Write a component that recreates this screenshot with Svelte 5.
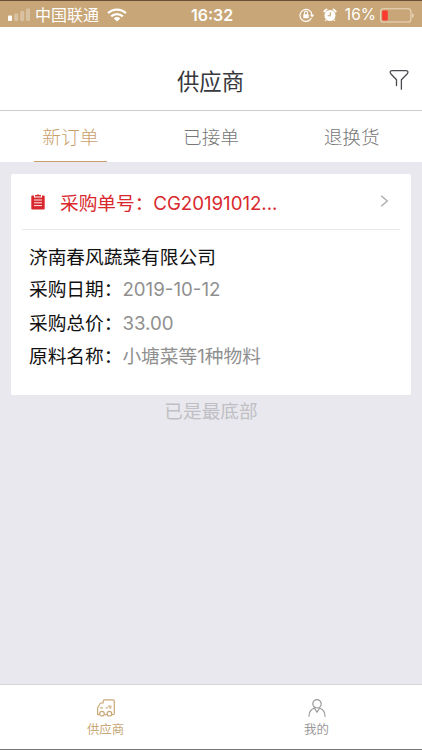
<script>
const tabs = ['新订单', '已接单', '退换货'];
let selected = $state(tabs[0]);

const order = {
    code: 'CG20191012...',
    company: '济南春风蔬菜有限公司',
    rows: [
        { label: '采购日期：', value: '2019-10-12' },
        { label: '采购总价：', value: '33.00' },
        { label: '原料名称：', value: '小塘菜等1种物料' },
    ],
};
</script>

<div class="screen">
  <div class="status">
    <div class="side">
      <svg class="signal" width="24" height="14" viewBox="0 0 24 14" fill="#fff">
        <rect x="0" y="7.6" width="4" height="5.4" rx="1" />
        <rect x="6.2" y="5.4" width="4" height="7.6" rx="1" opacity=".3" />
        <rect x="12.2" y="3" width="4" height="10" rx="1" opacity=".3" />
        <rect x="18" y="0.5" width="4" height="12.5" rx="1" opacity=".3" />
      </svg>
      <span class="carrier">中国联通</span>
      <svg class="wifi" width="20" height="14" viewBox="0 0 20 14" fill="none" stroke="#fff" stroke-width="2.3">
        <path d="M1.1 5.2a12.8 12.8 0 0 1 17.8 0" />
        <path d="M4.2 8.4a8.4 8.4 0 0 1 11.6 0" />
        <path d="M10 13.6 6.7 10.4a4.7 4.7 0 0 1 6.6 0z" fill="#fff" stroke="none" />
      </svg>
    </div>
    <span class="time">16:32</span>
    <div class="side right">
      <svg class="lock" width="16" height="14" viewBox="0 0 16 14" fill="none" stroke="#fff" stroke-width="1.2">
        <path d="M12.4 10.1A6 6 0 1 1 13 7" />
        <path d="M10.9 6.8h4.4L13.1 9.6z" fill="#fff" stroke="none" />
        <rect x="4.3" y="6.2" width="5.4" height="4" rx=".5" fill="#fff" stroke="none" />
        <path d="M5.4 6.4V5a1.6 1.6 0 0 1 3.2 0v1.4" stroke-width="1.1" />
      </svg>
      <svg class="alarm" width="14" height="14" viewBox="0 0 14 14" fill="none">
        <circle cx="7" cy="7.5" r="5.5" fill="#fff" />
        <path d="M1.2 3.5 3.5 1.4M12.8 3.5 10.5 1.4" stroke="#fff" stroke-width="1.8" stroke-linecap="round" />
        <path d="M3 11.8 2.2 13M11 11.8l.8 1.2" stroke="#fff" stroke-width="1.3" />
        <path d="M7.3 4.3v3.5H4.6" stroke="#c8a677" stroke-width="1.1" />
      </svg>
      <span class="percent">16%</span>
      <svg class="battery" width="35" height="15" viewBox="0 0 35 15">
        <rect x=".6" y=".8" width="30.3" height="13.2" rx="2.8" fill="none" stroke="#ead9bf" stroke-width="1.1" />
        <rect x="2.2" y="2.4" width="5.6" height="10" rx="1" fill="#fb3b30" />
        <path d="M32.2 5.2c2 .6 2 4 0 4.6z" fill="#ead9bf" />
      </svg>
    </div>
  </div>

  <header>
    <h1>供应商</h1>
    <svg class="filter" width="20" height="22" viewBox="0 0 20 22" fill="none" stroke="#4a4a4f" stroke-width="1.3" stroke-linejoin="round" stroke-linecap="round">
      <path d="M7.5 16.5v-5.8L2 5C.6 3.4 1 1.7 2.9 1.7h14.3c1.9 0 2.3 1.7.9 3.3l-5.7 5.7v9.5" />
    </svg>
  </header>

  <nav class="tabs">
    {#each tabs as item}
      <button class="tab" class:active={selected === item} onclick={() => (selected = item)}>
        <span>{item}</span>
      </button>
    {/each}
  </nav>

  <main>
    <section class="card">
      <div class="head">
        <svg width="14" height="16" viewBox="0 0 14 16">
          <path d="M1.2 1.4H3v2h8v-2h1.8q.9 0 .9.9v12.2q0 1-.9 1H1.2q-.9 0-.9-1V2.3q0-.9.9-.9z" fill="#d9282d" />
          <path d="M4 1h1.8Q7-.6 8.2 1H10v1.6H4z" fill="#d9282d" />
          <path d="M3 6h8M3 8.8h8M3 11.6h8" stroke="#fff" stroke-width=".9" />
        </svg>
        <span class="code">采购单号：{order.code}</span>
        <svg class="arrow" width="9" height="12" viewBox="0 0 9 12" fill="none" stroke="#aaa" stroke-width="1.3">
          <path d="M1.2.8 7.3 6l-6.1 5.2" />
        </svg>
      </div>
      <div class="body">
        <div class="company">{order.company}</div>
        {#each order.rows as row}
          <div class="row">{row.label}<span>{row.value}</span></div>
        {/each}
      </div>
    </section>
    <p class="end">已是最底部</p>
  </main>

  <footer>
    <div class="item on">
      <svg width="20" height="18" viewBox="0 0 20 18" fill="none" stroke="#c9a878" stroke-width="1.2" stroke-linecap="round" stroke-linejoin="round">
        <path d="M3.2 15.6H1.6V8.8L4 4.7q.4-.7 1.2-.7h2V2.3q0-1.4 1.4-1.4h8.2q1.5 0 1.5 1.4v12q0 1.3-1.5 1.3h-.5M8.9 15.6h1.5" />
        <path d="M4.4 8.8h2M10 8.8h1.4M12.4 7.2h2.6M13.6 8.9H15" />
        <circle cx="6" cy="14.7" r="2.3" />
        <circle cx="13.4" cy="14.7" r="2.3" />
      </svg>
      <span>供应商</span>
    </div>
    <div class="item">
      <svg width="18" height="18" viewBox="0 0 18 18" fill="none" stroke="#999" stroke-width="1.2" stroke-linecap="round" stroke-linejoin="round">
        <circle cx="9" cy="4.8" r="4.2" />
        <path d="M1 17.3c0-4 2-7 5.3-8.3L9 13.3 11.7 9c3.3 1.3 5.3 4.3 5.3 8.3" />
      </svg>
      <span>我的</span>
    </div>
  </footer>
</div>

<style>
:global(body) {
  margin: 0;
}

.screen {
  box-sizing: border-box;
  display: flex;
  flex-direction: column;
  width: 422px;
  height: 750px;
  border-bottom: 1px solid #777;
  background: #e9e8ee;
  font-family: Inter, "Noto Sans CJK SC", sans-serif;
  font-size: 18.7px;
  overflow: hidden;
}

.status {
  box-sizing: border-box;
  display: flex;
  align-items: center;
  height: 27px;
  padding: 2px 8px 0;
  border-top: 1px solid #6b4e35;
  background: #c8a677;
  color: #fff;
  font-size: 16px;
  line-height: 24px;
}

.side {
  display: flex;
  align-items: center;
  flex: 1;
}

.right {
  justify-content: flex-end;
}

.carrier {
  margin-left: 3px;
}

.wifi {
  margin-left: 8px;
}

.time {
  margin: -1px 0 0 2px;
  font-weight: 600;
  font-size: 16px;
}

.lock {
  margin-right: 1px;
}

.alarm {
  margin-left: 7px;
}

.percent {
  margin: 0 4px 0 8px;
  font-size: 15.5px;
}

.battery {
  margin-right: -1px;
}

header {
  box-sizing: border-box;
  display: flex;
  align-items: center;
  height: 84px;
  padding: 27px 13px 0 32px;
  border-bottom: 1px solid #ccc;
  background: #fff;
}

h1 {
  flex: 1;
  margin: 0;
  color: #38383d;
  font-weight: 400;
  font-size: 22.4px;
  line-height: 32px;
  text-align: center;
}

.filter {
  margin-top: -4px;
}

.tabs {
  display: flex;
  height: 51px;
  background: #fff;
}

.tab {
  flex: 1;
  display: flex;
  justify-content: center;
  padding: 0;
  border: 0;
  background: none;
  color: #777;
  font: inherit;
  font-weight: 300;
}

.tab span {
  box-sizing: border-box;
  width: 73px;
  height: 51px;
  line-height: 53px;
  white-space: nowrap;
}

.tab.active {
  color: #c9a06a;
}

.active span {
  border-bottom: 1px solid #c9a06a;
}

main {
  flex: 1;
  padding: 12px 11px 0;
}

.card {
  box-sizing: border-box;
  height: 221px;
  padding: 0 11px;
  border-radius: 2px;
  background: #fff;
}

.head {
  display: flex;
  align-items: center;
  height: 55px;
  padding: 0 11px 0 9px;
  border-bottom: 1px solid #e8e8e8;
  color: #d9282d;
}

.code {
  flex: 1;
  margin: -1px 0 0 15px;
  letter-spacing: -0.03px;
}

.arrow {
  margin-top: -2px;
}

.body {
  padding: 13px 7px 0;
  color: #111;
}

.company {
  line-height: 30px;
}

.row {
  line-height: 33.6px;
}

.row span {
  color: #8f8f8f;
}

.end {
  margin: 3px 0 0;
  color: #c0c0c4;
  line-height: 28px;
  text-align: center;
}

footer {
  box-sizing: border-box;
  display: flex;
  height: 65px;
  padding-top: 14px;
  border-top: 1px solid #d5d5d8;
  background: #fff;
}

.item {
  flex: 1;
  display: flex;
  flex-direction: column;
  align-items: center;
  color: #999;
  font-size: 12.4px;
  line-height: 18px;
}

.item span {
  margin-top: 4px;
}

.item.on {
  color: #c9a878;
}
</style>
